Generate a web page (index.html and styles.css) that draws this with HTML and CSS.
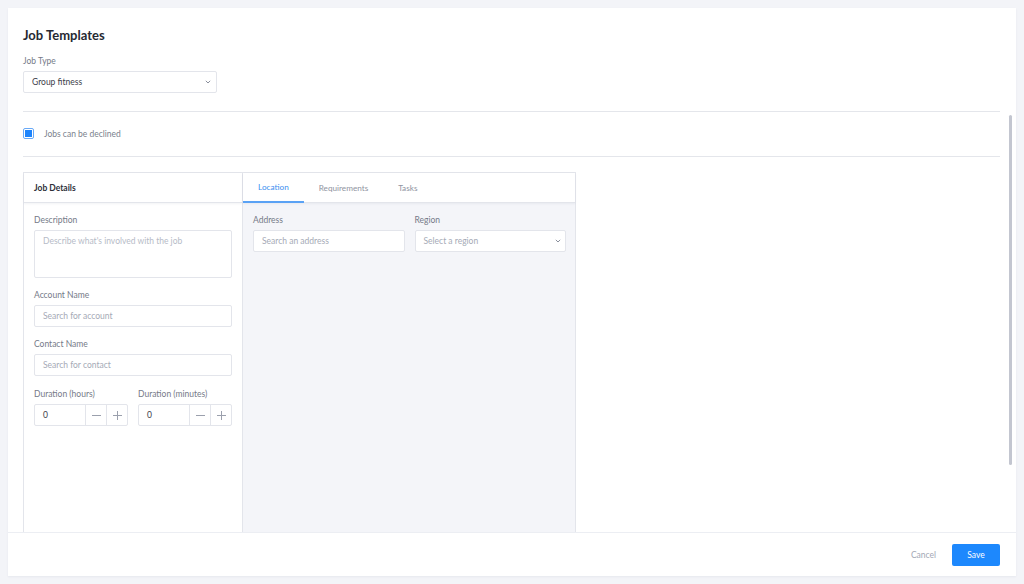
FILE: index.html
```html
<!DOCTYPE html>
<html lang="en">
<head>
<meta charset="utf-8">
<title>Job Templates</title>
<link rel="stylesheet" href="styles.css">
</head>
<body>
<div class="card">
  <div class="scroll">
    <h1 class="title">Job Templates</h1>
    <div class="label">Job Type</div>
    <div class="select job-type">
      <span class="value">Group fitness</span>
      <svg class="chev" width="6" height="4" viewBox="0 0 6 4"><path d="M0.8 0.8 L3 3 L5.2 0.8" fill="none" stroke="#8a8f9c" stroke-width="1"/></svg>
    </div>
    <hr class="divider first">
    <div class="check-row">
      <span class="checkbox"><span class="check-fill"></span></span>
      <span class="check-label">Jobs can be declined</span>
    </div>
    <hr class="divider second">
    <div class="panel">
      <div class="col-left">
        <div class="panel-head"><span class="head-title">Job Details</span></div>
        <div class="col-body left-body">
          <div class="field">
            <div class="label">Description</div>
            <div class="textarea placeholder">Describe what's involved with the job</div>
          </div>
          <div class="field">
            <div class="label">Account Name</div>
            <div class="input placeholder">Search for account</div>
          </div>
          <div class="field">
            <div class="label">Contact Name</div>
            <div class="input placeholder">Search for contact</div>
          </div>
          <div class="field-row durations">
            <div class="field grow">
              <div class="label">Duration (hours)</div>
              <div class="stepper">
                <span class="step-value">0</span>
                <span class="step-btn"><svg width="9" height="9" viewBox="0 0 9 9"><path d="M0 4.5 H9" stroke="#9ba0ad" stroke-width="1"/></svg></span>
                <span class="step-btn"><svg width="9" height="9" viewBox="0 0 9 9"><path d="M0 4.5 H9 M4.5 0 V9" stroke="#9ba0ad" stroke-width="1"/></svg></span>
              </div>
            </div>
            <div class="field grow">
              <div class="label">Duration (minutes)</div>
              <div class="stepper">
                <span class="step-value">0</span>
                <span class="step-btn"><svg width="9" height="9" viewBox="0 0 9 9"><path d="M0 4.5 H9" stroke="#9ba0ad" stroke-width="1"/></svg></span>
                <span class="step-btn"><svg width="9" height="9" viewBox="0 0 9 9"><path d="M0 4.5 H9 M4.5 0 V9" stroke="#9ba0ad" stroke-width="1"/></svg></span>
              </div>
            </div>
          </div>
        </div>
      </div>
      <div class="col-right">
        <div class="panel-head tabs">
          <span class="tab active">Location</span>
          <span class="tab">Requirements</span>
          <span class="tab">Tasks</span>
        </div>
        <div class="col-body right-body">
          <div class="field-row">
            <div class="field grow">
              <div class="label">Address</div>
              <div class="input placeholder">Search an address</div>
            </div>
            <div class="field grow">
              <div class="label">Region</div>
              <div class="select region">
                <span class="value placeholder-text">Select a region</span>
                <svg class="chev" width="6" height="4" viewBox="0 0 6 4"><path d="M0.8 0.8 L3 3 L5.2 0.8" fill="none" stroke="#8a8f9c" stroke-width="1"/></svg>
              </div>
            </div>
          </div>
        </div>
      </div>
    </div>
  </div>
  <div class="scroll-thumb"></div>
  <div class="footer">
    <button class="btn cancel">Cancel</button>
    <button class="btn save">Save</button>
  </div>
</div>
</body>
</html>
```

FILE: styles.css
```css
* { box-sizing: border-box; }
html, body { margin: 0; padding: 0; }
body {
  background: #f3f4f8;
  padding: 8px;
  font-family: "Lato", "Noto Sans", sans-serif;
  color: #2d3039;
}
.card {
  position: relative;
  width: 1008px;
  height: 568px;
  background: #ffffff;
  display: flex;
  flex-direction: column;
  box-shadow: 0 1px 2px rgba(40, 50, 80, 0.06);
}
.scroll {
  flex: 1;
  overflow: hidden;
  padding: 19px 16px 0 15px;
}
.title {
  margin: 0;
  font-size: 13px;
  line-height: 16px;
  font-weight: 700;
  color: #262932;
  margin-bottom: 12px;
}
.label {
  font-size: 8.5px;
  line-height: 12px;
  color: #757a88;
  margin-bottom: 4px;
}
.select, .input, .textarea, .stepper {
  background: #fff;
  border: 1px solid #e3e5eb;
  border-radius: 2px;
  font-size: 8.5px;
}
.select {
  height: 22px;
  display: flex;
  align-items: center;
  justify-content: space-between;
  padding: 0 5px 0 8px;
  color: #3d4049;
}
.select.region { padding-right: 4px; }
.job-type { width: 194px; }
.chev { display: block; }
.placeholder-text { color: #a5aab6; }
.input {
  height: 22px;
  display: flex;
  align-items: center;
  padding: 0 8px;
}
.placeholder { color: #a5aab6; }
.textarea {
  height: 48px;
  padding: 4px 8px;
  line-height: 12px;
  color: #b6bbc7;
}
.divider {
  border: 0;
  border-top: 1px solid #e4e6eb;
  margin: 0;
}
.divider.first { margin-top: 18px; }
.check-row {
  display: flex;
  align-items: center;
  height: 11px;
  margin: 16px 0 17px 0;
}
.checkbox {
  width: 11px;
  height: 11px;
  border: 1px solid #68a9f7;
  border-radius: 2px;
  padding: 1px;
  display: block;
  background: #fff;
}
.check-fill {
  display: block;
  width: 100%;
  height: 100%;
  background: #1d84fc;
}
.check-label {
  font-size: 8.5px;
  color: #7a7f8c;
  margin-left: 10px;
}
.panel {
  margin-top: 15px;
  width: 553px;
  height: 420px;
  display: flex;
  border: 1px solid #e3e5eb;
  border-bottom: 0;
}
.col-left {
  width: 219px;
  flex: none;
  background: #fff;
  border-right: 1px solid #e3e5eb;
  display: flex;
  flex-direction: column;
}
.col-right {
  flex: 1;
  background: #f4f5f9;
  display: flex;
  flex-direction: column;
}
.panel-head {
  height: 30px;
  background: #fff;
  border-bottom: 1px solid #e3e5eb;
  box-shadow: 0 1px 2px rgba(40, 50, 80, 0.06);
  display: flex;
  align-items: center;
  padding: 0 10px;
  flex: none;
}
.head-title {
  font-size: 8.5px;
  font-weight: 700;
  color: #2d3039;
}
.col-body {
  padding: 11px 10px 10px 10px;
  display: flex;
  flex-direction: column;
  gap: 11px;
}
.right-body { padding-right: 9px; }
.field { display: flex; flex-direction: column; }
.field-row { display: flex; gap: 10px; }
.durations { margin-top: 1px; }
.field.grow { flex: 1; min-width: 0; }
.stepper {
  height: 22px;
  display: flex;
  align-items: stretch;
}
.step-value {
  flex: 1;
  display: flex;
  align-items: center;
  padding: 0 8px;
  color: #3d4049;
}
.step-btn {
  width: 21px;
  border-left: 1px solid #e3e5eb;
  display: flex;
  align-items: center;
  justify-content: center;
}
.step-btn svg { display: block; }
.tabs {
  padding: 0;
  align-items: stretch;
}
.tab {
  font-size: 8.2px;
  color: #8f94a1;
  display: flex;
  align-items: center;
  padding: 0 15px;
  border-bottom: 1px solid transparent;
  margin-bottom: -1px;
}
.tab.active {
  color: #3b8ff0;
  border-bottom: 2px solid #5aa2f5;
}
.scroll-thumb {
  position: absolute;
  right: 4px;
  top: 107px;
  width: 3px;
  height: 350px;
  border-radius: 2px;
  background: #c3c6d0;
}
.footer {
  height: 44px;
  flex: none;
  border-top: 1px solid #eceef3;
  display: flex;
  align-items: center;
  justify-content: flex-end;
  padding: 0 16px 0 0;
  gap: 8px;
}
.btn {
  font-family: inherit;
  font-size: 8.5px;
  border: 0;
  border-radius: 2px;
  cursor: pointer;
}
.cancel {
  background: transparent;
  color: #a3a8b5;
  padding: 0 8px;
  height: 22px;
}
.save {
  background: #1d88fd;
  color: #fff;
  width: 48px;
  height: 22px;
}
```
